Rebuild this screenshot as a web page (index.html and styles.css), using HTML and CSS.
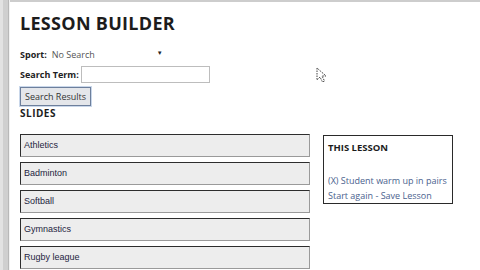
FILE: index.html
```html
<!DOCTYPE html>
<html lang="en">
<head>
  <meta charset="UTF-8">
  <title>Lesson Builder</title>
  <link rel="stylesheet" href="styles.css">
</head>
<body>
<div class="frame">
  <div class="side"></div>
  <div class="main">
    <h1>LESSON BUILDER</h1>

    <div class="row">
      <label>Sport:</label>
      <div class="pick">No Search <span class="arrow">&#9660;</span></div>
    </div>
    <div class="row">
      <label>Search Term:</label>
      <input type="text" class="term">
    </div>
    <button class="go">Search Results</button>

    <h2>SLIDES</h2>

    <div class="cols">
      <div class="slides">
        <div class="slide">Athletics</div>
        <div class="slide">Badminton</div>
        <div class="slide">Softball</div>
        <div class="slide">Gymnastics</div>
        <div class="slide">Rugby league</div>
      </div>
      <div class="lesson">
        <h3>THIS LESSON</h3>
        <a href="#" class="item">(X) Student warm up in pairs</a>
        <div class="actions"><a href="#">Start again</a> - <a href="#">Save Lesson</a></div>
      </div>
    </div>

    <svg class="cursor" width="11" height="16" viewBox="0 0 11 16">
      <path d="M1 1 L1 13 L4 10 L6.5 15 L8.5 14 L6 9 L10 9 Z" fill="#fff" stroke="#444" stroke-width="1" stroke-dasharray="1.5 1"/>
    </svg>
  </div>
</div>
</body>
</html>
```

FILE: styles.css
```css
* { box-sizing: border-box; }
body {
  margin: 0;
  background: #fff;
  font-family: 'Open Sans', sans-serif;
  color: #222;
}
.frame {
  display: flex;
  height: 270px;
  overflow: hidden;
}
.side {
  width: 10px;
  background: linear-gradient(to right, #e2e2e2 0, #e2e2e2 3px, #cfcfcf 3px, #cfcfcf 8px, #b8b8b8 8px, #b8b8b8 9px, #f2f2f2 9px);
}
.main {
  flex: 1;
  position: relative;
  border-top: 2px solid #cdcdcd;
  padding-left: 10px;
}
h1 {
  margin: 9px 0 0;
  font-size: 18px;
  font-weight: bold;
  letter-spacing: 0.3px;
  color: #1c1c1c;
  line-height: 24px;
}
.row {
  display: flex;
  align-items: center;
  font-size: 9px;
}
.row:first-of-type { margin-top: 12px; height: 14px; }
.row + .row { margin-top: 5px; }
label {
  font-weight: bold;
  color: #222;
  margin-right: 2px;
}
.pick {
  width: 114px;
  padding-left: 3px;
  color: #555;
  position: relative;
}
.arrow {
  position: absolute;
  right: 0;
  top: 1px;
  font-size: 6px;
  color: #222;
}
.term {
  width: 129px;
  height: 17px;
  border: 1px solid #bdbdbd;
  padding: 0 2px;
  font-size: 9px;
}
.go {
  margin-top: 2px;
  height: 19px;
  padding: 0 4px;
  font-family: 'Open Sans', sans-serif;
  font-size: 9px;
  color: #333;
  background: #e4e6ea;
  border: 1px solid #6d7f9c;
  box-shadow: 0 0 0 1px #c9d7ea;
}
h2 {
  margin: 0;
  font-size: 10px;
  font-weight: bold;
  letter-spacing: 0.5px;
  color: #1c1c1c;
}
.cols {
  display: flex;
  align-items: flex-start;
  gap: 13px;
  margin-top: 14px;
}
.slides {
  width: 290px;
  display: flex;
  flex-direction: column;
  gap: 5px;
}
.slide {
  height: 23px;
  background: #ededed;
  border: 1px solid #9a9a9a;
  border-top-color: #2d2d2d;
  border-left-color: #2d2d2d;
  font-family: 'Liberation Sans', Arial, sans-serif;
  font-size: 9px;
  color: #1d2440;
  padding: 5px 3px 0;
}
.lesson {
  width: 130px;
  height: 69px;
  margin-top: 1px;
  border: 1px solid #2a2a2a;
  padding: 5px 4px 0;
  font-size: 9px;
}
h3 {
  margin: 0 0 19px;
  font-size: 9.5px;
  font-weight: bold;
  color: #1c1c1c;
}
.lesson a {
  color: #4a628e;
  text-decoration: none;
}
.item { display: block; line-height: 15px; }
.actions { color: #4a628e; line-height: 15px; }
.cursor {
  position: absolute;
  left: 306px;
  top: 65px;
}
```
